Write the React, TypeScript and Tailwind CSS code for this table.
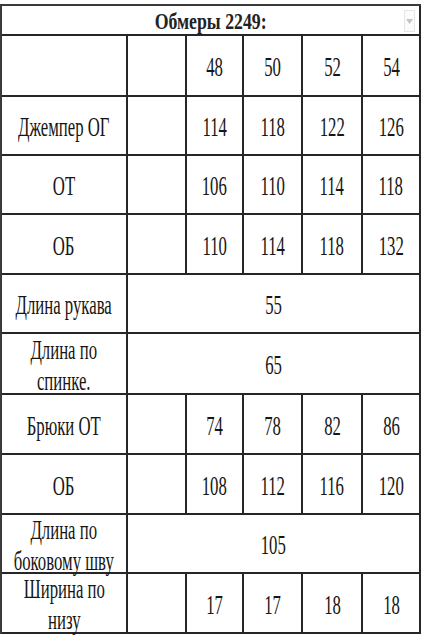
import React from 'react';

type Row = {
  label: string[];
  values?: string[];
  merged?: string;
  height: string;
};

const rows: Row[] = [
  { label: [''], values: ['48', '50', '52', '54'], height: 'h-[61px]' },
  { label: ['Джемпер ОГ'], values: ['114', '118', '122', '126'], height: 'h-[59px]' },
  { label: ['ОТ'], values: ['106', '110', '114', '118'], height: 'h-[59px]' },
  { label: ['ОБ'], values: ['110', '114', '118', '132'], height: 'h-[60px]' },
  { label: ['Длина рукава'], merged: '55', height: 'h-[59px]' },
  { label: ['Длина по', 'спинке.'], merged: '65', height: 'h-[61px]' },
  { label: ['Брюки ОТ'], values: ['74', '78', '82', '86'], height: 'h-[60px]' },
  { label: ['ОБ'], values: ['108', '112', '116', '120'], height: 'h-[60px]' },
  { label: ['Длина по', 'боковому шву'], merged: '105', height: 'h-[59px]' },
  { label: ['Ширина по', 'низу'], values: ['17', '17', '18', '18'], height: 'h-[60px]' },
];

const Txt: React.FC<{ lines: string[] }> = ({ lines }) => (
  <span className="inline-block scale-x-[0.62] whitespace-nowrap text-center text-[27px] leading-[31px] text-[#161616]">
    {lines.map((l, i) => (
      <span key={i} className="block">
        {l}
      </span>
    ))}
  </span>
);

const cell = 'flex items-center justify-center border-r-2 border-b-2 border-[#262626] pt-1 overflow-visible';

export default function App() {
  return (
    <div className="w-[424px] h-[636px] bg-white pt-[4px] font-['Liberation_Serif',serif]">
      <div className="w-[421px] border-l-2 border-t-2 border-[#3a3a3a] grid grid-cols-[126px_59px_57px_59px_60px_58px]">
        {/* title */}
        <div className="col-span-6 relative flex h-[30px] items-center justify-center border-r-2 border-b-2 border-[#262626] pt-[2px]">
          <span className="inline-block scale-x-[0.74] whitespace-nowrap text-[24px] font-bold leading-none text-[#222]">
            Обмеры 2249:
          </span>
          <div className="absolute right-[4px] top-[4px] flex h-[22px] w-[11px] items-center justify-center border border-[#e6e6e6] bg-[#fbfbfb]">
            <svg width="7" height="5" viewBox="0 0 7 5">
              <path d="M0 0 L7 0 L3.5 5 Z" fill="#c4c4c4" />
            </svg>
          </div>
        </div>

        {rows.map((r, i) => (
          <React.Fragment key={i}>
            <div className={`${cell} ${r.height}`}>
              <Txt lines={r.label} />
            </div>
            {r.merged ? (
              <div className={`${cell} ${r.height} col-span-5`}>
                <Txt lines={[r.merged]} />
              </div>
            ) : (
              <>
                <div className={`${cell} ${r.height}`} />
                {r.values!.map((v, j) => (
                  <div key={j} className={`${cell} ${r.height}`}>
                    <Txt lines={[v]} />
                  </div>
                ))}
              </>
            )}
          </React.Fragment>
        ))}
      </div>
    </div>
  );
}
